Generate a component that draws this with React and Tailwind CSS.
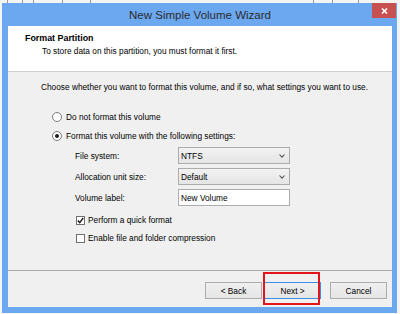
import { useState } from "react";

function Radio({ checked }) {
  return (
    <span className="flex h-[10px] w-[10px] shrink-0 items-center justify-center rounded-full border border-[#7c7c7c] bg-white">
      {checked && <span className="h-[4px] w-[4px] rounded-full bg-[#1e1e1e]" />}
    </span>
  );
}

function Checkbox({ checked }) {
  return (
    <span className="flex h-[9px] w-[9px] shrink-0 items-center justify-center border border-[#6f6f6f] bg-white">
      {checked && (
        <svg width="7" height="7" viewBox="0 0 7 7">
          <path d="M0.8 3.6 L2.7 5.6 L6.2 1" fill="none" stroke="#1a1a1a" strokeWidth="1.4" />
        </svg>
      )}
    </span>
  );
}

function Select({ value }) {
  return (
    <div className="flex h-[17px] w-[112px] items-center justify-between border border-[#acacac] bg-linear-to-b from-[#f2f2f2] to-[#e5e5e5] pl-[2px] pr-[4px]">
      <span>{value}</span>
      <svg width="6" height="4" viewBox="0 0 6 4">
        <path d="M0.5 0.5 L3 3.2 L5.5 0.5" fill="none" stroke="#555" strokeWidth="1.1" />
      </svg>
    </div>
  );
}

function Button({ label, primary, children }) {
  return (
    <div className="relative">
      <div
        className={
          "flex h-[17px] w-[57px] items-center justify-center border bg-linear-to-b from-[#f0f0f0] to-[#e5e5e5] " +
          (primary ? "border-[#3c8fe6]" : "border-[#acacac]")
        }
      >
        {label}
      </div>
      {children}
    </div>
  );
}

export default function App() {
  const [fmt] = useState("format");

  return (
    <div className="flex h-[314px] w-[400px] flex-col overflow-hidden bg-[#f4f4f4] font-['Liberation_Sans',Arial,sans-serif] text-[8.3px] leading-[12px] text-black">
      {/* desktop behind the window */}
      <div className="flex h-[3px] shrink-0">
        <div className="w-[7px]" />
        <div className="w-[15px] border-l border-[#9a9a9a]" />
        <div className="w-[11px] border-l border-[#9a9a9a]" />
        <div className="w-[29px] border-l border-[#9a9a9a]" />
        <div className="w-[28px] border-l border-[#9a9a9a]" />
        <div className="w-[223px] border-l border-[#9a9a9a]" />
        <div className="w-[19px] border-l border-[#9a9a9a]" />
        <div className="w-[26px] border-l border-[#9a9a9a]" />
        <div className="flex-1 border-l border-[#9a9a9a]" />
      </div>

      <div className="flex shrink-0">
        <div className="w-[2px]" />
        <div className="flex h-[310px] w-[395px] flex-col bg-[#6ba8f0] pb-[6px] pl-[6px] pr-[5px]">
          {/* title bar */}
          <div className="relative flex h-[23px] shrink-0 items-center justify-center">
            <span className="text-[11.5px] text-[#2b2b2b]">New Simple Volume Wizard</span>
            <div className="absolute right-[-4px] top-0 flex h-[15px] w-[24px] items-center justify-center bg-[#c75050]">
              <svg width="7" height="6" viewBox="0 0 7 6">
                <path d="M1 0.5 L6 5.5 M6 0.5 L1 5.5" stroke="#fff" strokeWidth="1.6" />
              </svg>
            </div>
          </div>

          {/* client area */}
          <div className="flex flex-1 flex-col bg-[#f0f0f0]">
            <div className="h-[46px] shrink-0 border-b border-[#cfcfcf] bg-white pl-[17px] pt-[6px]">
              <div className="text-[8.9px] font-bold">Format Partition</div>
              <div className="mt-[1px] pl-[17px]">To store data on this partition, you must format it first.</div>
            </div>

            <div className="flex flex-col pl-[33px] pt-[9px]">
              <div>Choose whether you want to format this volume, and if so, what settings you want to use.</div>

              <div className="mt-[16px] flex h-[16px] items-center gap-[4px] pl-[11px]">
                <Radio checked={fmt === "none"} />
                <span>Do not format this volume</span>
              </div>
              <div className="mt-[3px] flex h-[16px] items-center gap-[4px] pl-[11px]">
                <Radio checked={fmt === "format"} />
                <span>Format this volume with the following settings:</span>
              </div>

              <div className="mt-[3px] flex items-center pl-[34px]">
                <span className="w-[103px]">File system:</span>
                <Select value="NTFS" />
              </div>
              <div className="mt-[4px] flex items-center pl-[34px]">
                <span className="w-[103px]">Allocation unit size:</span>
                <Select value="Default" />
              </div>
              <div className="mt-[4px] flex items-center pl-[34px]">
                <span className="w-[103px]">Volume label:</span>
                <div className="flex h-[17px] w-[112px] items-center border border-[#abadb3] bg-white pl-[2px]">
                  New Volume
                </div>
              </div>

              <div className="mt-[6px] flex h-[16px] items-center gap-[3px] pl-[35px]">
                <Checkbox checked />
                <span>Perform a quick format</span>
              </div>
              <div className="mt-[2px] flex h-[16px] items-center gap-[3px] pl-[35px]">
                <Checkbox />
                <span>Enable file and folder compression</span>
              </div>
            </div>

            <div className="mt-auto flex h-[37px] shrink-0 items-start justify-end border-t border-[#a9a9a9] pr-[5px] pt-[11px]">
              <Button label="< Back" />
              <div className="w-[2px]" />
              <Button label="Next >" primary>
                <div className="absolute left-[-1px] top-[-10px] h-[33px] w-[57px] border-[2px] border-[#e3141c]" />
              </Button>
              <div className="w-[9px]" />
              <Button label="Cancel" />
            </div>
          </div>
        </div>
        <div className="flex-1" />
      </div>
    </div>
  );
}
